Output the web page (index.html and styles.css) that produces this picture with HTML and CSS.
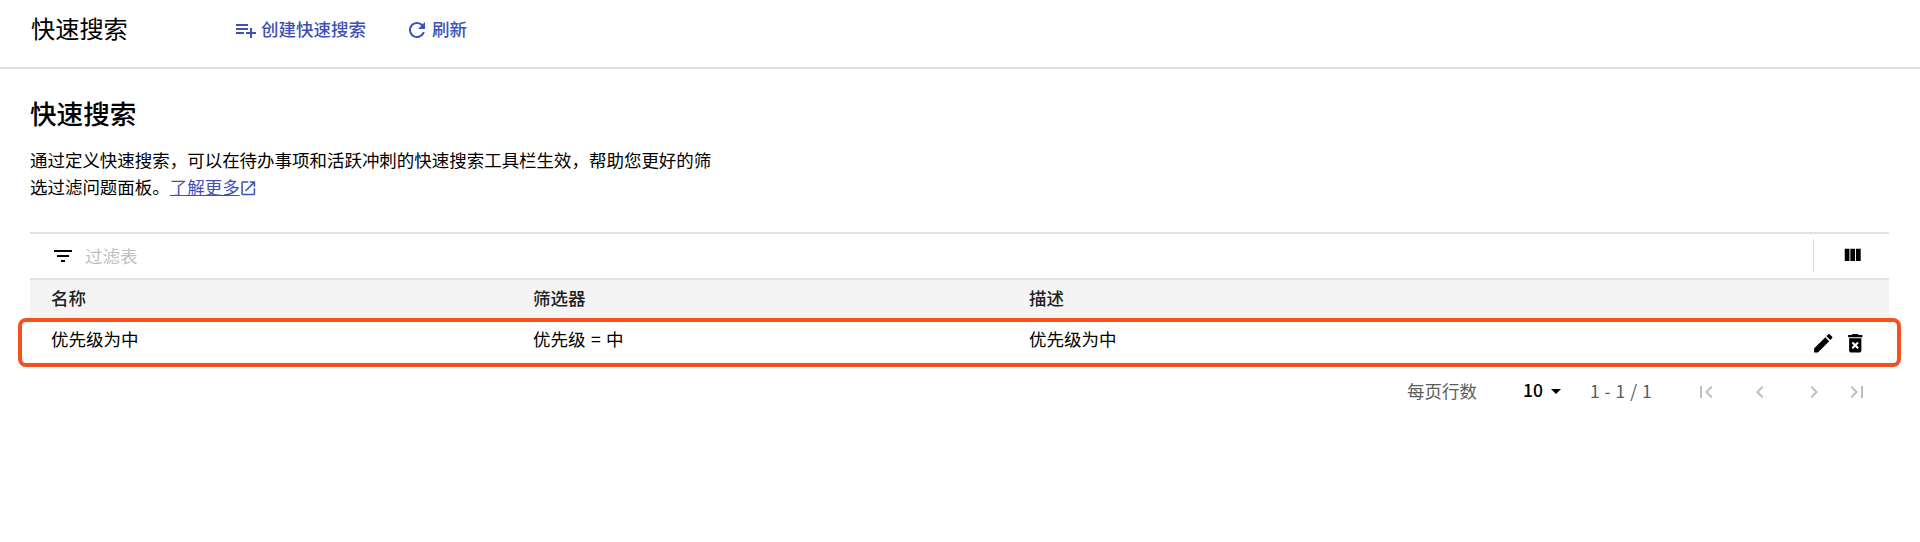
FILE: index.html
```html
<!DOCTYPE html>
<html lang="zh-CN">
<head>
<meta charset="utf-8">
<title>快速搜索</title>
<link rel="stylesheet" href="styles.css">
</head>
<body>
<header class="page-header">
  <div class="page-title">快速搜索</div>
  <button class="action create"><svg class="icon" viewBox="0 0 24 24"><path d="M14 10H2v2h12v-2zm0-4H2v2h12V6zm4 8v-4h-2v4h-4v2h4v4h2v-4h4v-2h-4zM2 16h8v-2H2v2z"/></svg><span>创建快速搜索</span></button>
  <button class="action refresh"><svg class="icon" viewBox="0 0 24 24"><path d="M17.65 6.35C16.2 4.9 14.21 4 12 4c-4.42 0-7.99 3.58-7.99 8s3.57 8 7.99 8c3.73 0 6.84-2.55 7.73-6h-2.08c-.82 2.33-3.04 4-5.65 4-3.31 0-6-2.69-6-6s2.69-6 6-6c1.66 0 3.14.69 4.22 1.78L13 11h7V4l-2.35 2.35z"/></svg><span>刷新</span></button>
</header>
<main class="content">
  <h1 class="heading">快速搜索</h1>
  <p class="intro">通过定义快速搜索，可以在待办事项和活跃冲刺的快速搜索工具栏生效，帮助您更好的筛<br>选过滤问题面板。<a class="more" href="#"><span class="more-text">了解更多</span><svg class="icon-open" viewBox="0 0 24 24"><path d="M19 19H5V5h7V3H5c-1.11 0-2 .9-2 2v14c0 1.1.89 2 2 2h14c1.1 0 2-.9 2-2v-7h-2v7zM14 3v2h3.59l-9.83 9.83 1.41 1.41L19 6.41V10h2V3h-7z"/></svg></a></p>
  <section class="table">
    <div class="filter-bar">
      <svg class="icon" viewBox="0 0 24 24"><path d="M10 18h4v-2h-4v2zM3 6v2h18V6H3zm3 7h12v-2H6v2z"/></svg>
      <span class="placeholder">过滤表</span>
      <div class="columns-toggle"><svg class="icon-columns" viewBox="0 0 24 24"><path d="M10 18h5V5h-5v13zm-6 0h5V5H4v13zM16 5v13h5V5h-5z"/></svg></div>
    </div>
    <div class="row head"><span>名称</span><span>筛选器</span><span>描述</span></div>
    <div class="row item">
      <span>优先级为中</span><span>优先级 = 中</span><span>优先级为中</span>
      <div class="tools">
        <svg class="icon-tool" viewBox="0 0 24 24"><path d="M3 17.25V21h3.75L17.81 9.94l-3.75-3.75L3 17.25zM20.71 7.04c.39-.39.39-1.02 0-1.41l-2.34-2.34c-.39-.39-1.02-.39-1.41 0l-1.83 1.83 3.75 3.75 1.83-1.83z"/></svg>
        <svg class="icon-tool" viewBox="0 0 24 24"><path d="M6 19c0 1.1.9 2 2 2h8c1.1 0 2-.9 2-2V7H6v12zm2.46-7.12l1.41-1.41L12 12.59l2.12-2.12 1.41 1.41L13.41 14l2.12 2.12-1.41 1.41L12 15.41l-2.12 2.12-1.41-1.41L10.59 14l-2.13-2.12zM15.5 4l-1-1h-5l-1 1H5v2h14V4z"/></svg>
      </div>
      <div class="highlight"></div>
    </div>
  </section>
  <nav class="pager">
    <span class="label">每页行数</span>
    <span class="size">10</span>
    <svg class="icon caret" viewBox="0 0 24 24"><path d="M7 10l5 5 5-5z"/></svg>
    <span class="range">1 - 1 / 1</span>
    <svg class="icon first" viewBox="0 0 24 24"><path d="M18.41 16.59L13.82 12l4.59-4.59L17 6l-6 6 6 6zM6 6h2v12H6z"/></svg>
    <svg class="icon prev" viewBox="0 0 24 24"><path d="M15.41 7.41L14 6l-6 6 6 6 1.41-1.41L10.83 12z"/></svg>
    <svg class="icon next" viewBox="0 0 24 24"><path d="M10 6L8.59 7.41 13.17 12l-4.58 4.59L10 18l6-6z"/></svg>
    <svg class="icon last" viewBox="0 0 24 24"><path d="M5.59 7.41L10.18 12l-4.59 4.59L7 18l6-6-6-6zM16 6h2v12h-2z"/></svg>
  </nav>
</main>
</body>
</html>
```
FILE: styles.css
```css
* { box-sizing: border-box; }
body {
  margin: 0;
  background: #fff;
  color: #000;
  font-family: "Noto Sans CJK SC", sans-serif;
  font-size: 17.5px;
}
svg { display: block; flex: none; fill: currentColor; }
.icon { width: 24px; height: 24px; }
.page-header {
  display: flex;
  align-items: center;
  height: 69px;
  padding: 0 0 9px 31px;
  border-bottom: 2px solid #dfdfdf;
}
.page-title { width: 203px; padding-bottom: 2px; font-size: 24.2px; line-height: 36px; }
.action {
  display: flex;
  align-items: center;
  padding: 2px 0 0;
  border: 0;
  background: none;
  color: #3f51b5;
  font: 500 17.5px/24px "Noto Sans CJK SC", sans-serif;
}
.action span { padding-bottom: 2px; }
.create { gap: 3px; width: 171px; }
.refresh { gap: 3px; }
.content { padding: 0 31px 0 30px; }
.heading { margin: 0; padding-top: 24px; font-size: 26.6px; font-weight: 500; line-height: 40px; }
.intro { height: 54px; margin: 13px 0 0; font-size: 17.48px; line-height: 27px; white-space: nowrap; }
.more { display: inline-flex; align-items: center; color: #3f51b5; text-decoration: none; }
.more-text { text-decoration: underline; }
.icon-open { width: 18.5px; height: 18.5px; margin: 3px 0 0 -1px; }
.table { margin-top: 32px; }
.filter-bar {
  display: flex;
  align-items: center;
  height: 46px;
  padding: 0 0 1px 21px;
  border-top: 2px solid #e2e2e2;
}
.placeholder { margin-left: 10px; padding-bottom: 1px; color: #bfbfbf; }
.columns-toggle {
  display: flex;
  align-items: center;
  width: 76px;
  height: 33px;
  margin-left: auto;
  padding-left: 27px;
  border-left: 1px solid #dcdcdc;
}
.icon-columns { width: 22.5px; height: 22.5px; }
.row { display: grid; grid-template-columns: 482px 496px 1fr auto; padding-left: 21px; }
.head {
  height: 40px;
  align-items: center;
  padding-bottom: 4px;
  border-top: 2px solid #e2e2e2;
  background: #f4f4f4;
  color: #212121;
  font-weight: 500;
}
.item { position: relative; height: 48px; padding-top: 8px; line-height: 26px; word-spacing: 1.5px; }
.tools { display: flex; gap: 7px; margin-right: 22px; padding-top: 5px; }
.icon-tool { width: 24.5px; height: 24.5px; }
.highlight {
  position: absolute;
  inset: 0 -12px -1px -12px;
  border: 4px solid #f4511e;
  border-radius: 8px;
}
.pager { display: flex; align-items: center; height: 52px; padding-left: 1377px; color: #5c5c5c; }
.label, .range { padding-bottom: 3px; }
.size { margin-left: 46px; padding-bottom: 5px; color: #000; font-weight: 500; }
.label { width: 70px; }
.caret { margin-left: 1px; margin-bottom: 2px; color: #000; }
.range { width: 64px; margin-left: 22px; white-space: nowrap; word-spacing: 1px; }
.first, .prev, .next, .last { color: #bdbdbd; }
.first { margin-left: 40px; }
.prev { margin-left: 30px; }
.next { margin-left: 30px; }
.last { margin-left: 19px; }
```
